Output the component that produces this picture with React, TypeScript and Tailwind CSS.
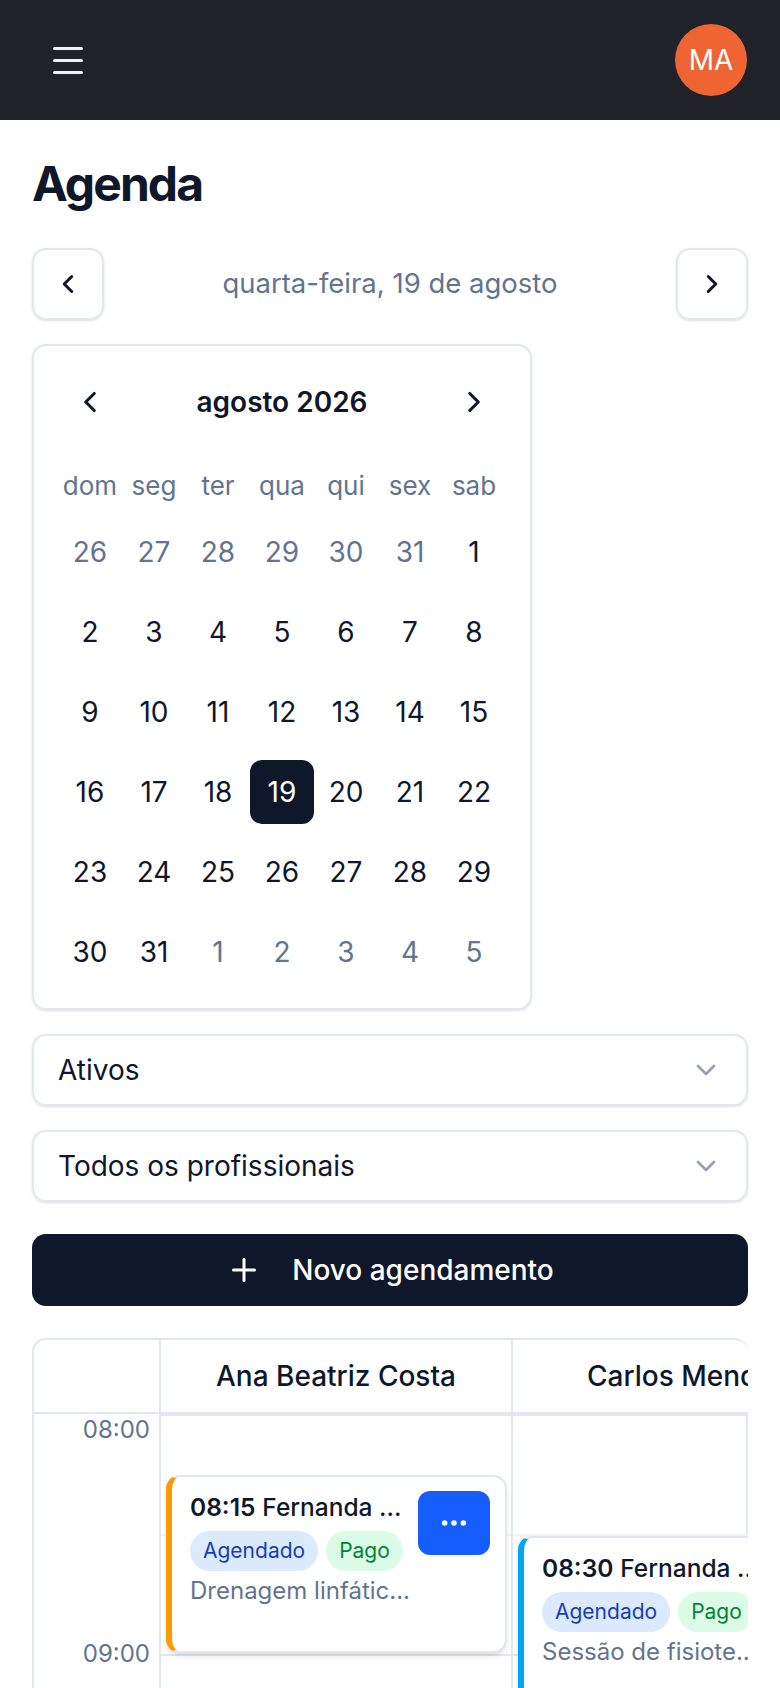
import React from 'react';
import { ChevronLeft, ChevronRight, ChevronDown, Plus, Ellipsis } from 'lucide-react';

const weekDays = ['dom', 'seg', 'ter', 'qua', 'qui', 'sex', 'sab'];

type Day = { n: number; out?: boolean; selected?: boolean };

const weeks: Day[][] = [
  [{ n: 26, out: true }, { n: 27, out: true }, { n: 28, out: true }, { n: 29, out: true }, { n: 30, out: true }, { n: 31, out: true }, { n: 1 }],
  [2, 3, 4, 5, 6, 7, 8].map((n) => ({ n })),
  [9, 10, 11, 12, 13, 14, 15].map((n) => ({ n })),
  [16, 17, 18, 19, 20, 21, 22].map((n) => ({ n, selected: n === 19 })),
  [23, 24, 25, 26, 27, 28, 29].map((n) => ({ n })),
  [{ n: 30 }, { n: 31 }, { n: 1, out: true }, { n: 2, out: true }, { n: 3, out: true }, { n: 4, out: true }, { n: 5, out: true }],
];

const Badge: React.FC<{ tone: 'blue' | 'green'; children: React.ReactNode }> = ({ tone, children }) => (
  <span
    className={
      tone === 'blue'
        ? 'h-[40px] px-[13px] rounded-full flex items-center text-[21px] bg-blue-100 text-blue-800'
        : 'h-[40px] px-[13px] rounded-full flex items-center text-[21px] bg-green-100 text-green-700'
    }
  >
    {children}
  </span>
);

const Appointment: React.FC<{ time: string; name: string; desc: string; accent: string; className: string }> = ({
  time,
  name,
  desc,
  accent,
  className,
}) => (
  <div
    className={`absolute left-[5px] w-[341px] bg-white border-2 border-slate-200 border-l-[6px] ${accent} rounded-[14px] shadow-md pl-[18px] pr-[15px] pt-[14px] flex gap-[6px] z-10 ${className}`}
  >
    <div className="flex-1 min-w-0">
      <div className="text-[24.5px] leading-[32px] text-slate-900 whitespace-nowrap overflow-hidden">
        <span className="font-semibold">{time}</span> <span className="font-medium">{name}</span>
      </div>
      <div className="flex gap-[8px] mt-[8px]">
        <Badge tone="blue">Agendado</Badge>
        <Badge tone="green">Pago</Badge>
      </div>
      <div className="mt-[4px] text-[24px] leading-[32px] text-slate-500 whitespace-nowrap overflow-hidden">{desc}</div>
    </div>
    <button className="w-[72px] h-[64px] shrink-0 rounded-[12px] bg-blue-600 flex items-center justify-center">
      <Ellipsis size={32} strokeWidth={2.2} className="text-white" />
    </button>
  </div>
);

const Slots: React.FC = () => (
  <>
    <div className="h-[120px] border-t-2 border-slate-200" />
    <div className="h-[120px] border-t-2 border-slate-100" />
    <div className="h-[120px] border-t-2 border-slate-200" />
  </>
);

export default function App() {
  return (
    <div className="h-[1688px] overflow-hidden bg-white font-[Inter,sans-serif] text-slate-900">
      {/* Top bar */}
      <header className="h-[120px] bg-[#1f2228] flex items-center justify-between pl-[53px] pr-[33px]">
        <svg width="30" height="27" viewBox="0 0 30 27" fill="none">
          <path d="M1.5 1.5h27M1.5 13.5h27M1.5 25.5h27" stroke="#eef0f3" strokeWidth="3" strokeLinecap="round" />
        </svg>
        <div className="w-[72px] h-[72px] rounded-full bg-[#ee6533] flex items-center justify-center text-white text-[28px]">
          MA
        </div>
      </header>

      <main className="px-8 pt-8 flex flex-col">
        <h1 className="text-[48px] leading-[64px] font-bold tracking-[-0.04em] text-slate-900">Agenda</h1>

        {/* Day navigation */}
        <div className="mt-8 flex items-center justify-between">
          <button className="w-[72px] h-[72px] rounded-[14px] border-2 border-slate-200 shadow-sm flex items-center justify-center">
            <ChevronLeft size={30} strokeWidth={2.4} />
          </button>
          <span className="text-[27.5px] text-slate-500">quarta-feira, 19 de agosto</span>
          <button className="w-[72px] h-[72px] rounded-[14px] border-2 border-slate-200 shadow-sm flex items-center justify-center">
            <ChevronRight size={30} strokeWidth={2.4} />
          </button>
        </div>

        {/* Calendar */}
        <div className="mt-6 w-[500px] border-2 border-slate-200 rounded-[14px] shadow-sm p-6">
          <div className="h-[64px] flex items-center justify-between">
            <div className="w-[64px] flex justify-center">
              <ChevronLeft size={34} strokeWidth={2.2} />
            </div>
            <span className="text-[28px] font-semibold">agosto 2026</span>
            <div className="w-[64px] flex justify-center">
              <ChevronRight size={34} strokeWidth={2.2} />
            </div>
          </div>
          <div className="mt-8 h-[38px] grid grid-cols-7">
            {weekDays.map((d) => (
              <span key={d} className="flex items-center justify-center text-[26px] text-slate-500">
                {d}
              </span>
            ))}
          </div>
          <div className="mt-4 flex flex-col gap-4">
            {weeks.map((w, i) => (
              <div key={i} className="grid grid-cols-7">
                {w.map((d, j) => (
                  <span
                    key={j}
                    className={
                      d.selected
                        ? 'h-[64px] flex items-center justify-center text-[28px] rounded-[12px] bg-slate-900 text-white'
                        : d.out
                        ? 'h-[64px] flex items-center justify-center text-[28px] text-slate-500'
                        : 'h-[64px] flex items-center justify-center text-[28px] text-slate-900'
                    }
                  >
                    {d.n}
                  </span>
                ))}
              </div>
            ))}
          </div>
        </div>

        {/* Filters */}
        <div className="mt-6 h-[72px] rounded-[14px] border-2 border-slate-200 shadow-sm px-6 flex items-center justify-between">
          <span className="text-[28px]">Ativos</span>
          <ChevronDown size={32} strokeWidth={2} className="text-slate-400" />
        </div>
        <div className="mt-6 h-[72px] rounded-[14px] border-2 border-slate-200 shadow-sm px-6 flex items-center justify-between">
          <span className="text-[28px]">Todos os profissionais</span>
          <ChevronDown size={32} strokeWidth={2} className="text-slate-400" />
        </div>

        <button className="mt-8 h-[72px] rounded-[14px] bg-slate-900 text-white flex items-center justify-center gap-[30px]">
          <Plus size={36} strokeWidth={2} />
          <span className="text-[28px] font-medium">Novo agendamento</span>
        </button>

        {/* Schedule grid */}
        <div className="mt-8 w-[716px] border-t-2 border-l-2 border-slate-200 rounded-tl-[14px] rounded-tr-[14px] overflow-hidden">
          <div className="flex h-[74px] border-b-2 border-slate-200 w-[1183px]">
            <div className="w-[127px] shrink-0 border-r-2 border-slate-200" />
            <div className="w-[352px] shrink-0 border-r-2 border-slate-200 flex items-center justify-center text-[28px] font-medium">
              Ana Beatriz Costa
            </div>
            <div className="w-[352px] shrink-0 border-r-2 border-slate-200 flex items-center justify-center text-[28px] font-medium">
              Carlos Mendes
            </div>
            <div className="w-[352px] shrink-0 border-r-2 border-slate-200 flex items-center justify-center text-[28px] font-medium">
              Juliana Rocha
            </div>
          </div>
          <div className="border-r-2 border-slate-200">
            <div className="flex w-[1183px]">
              <div className="relative w-[127px] shrink-0 border-r-2 border-slate-200 h-[360px]">
                <span className="absolute right-[9px] top-0 text-[24px] leading-[32px] text-slate-500">08:00</span>
                <span className="absolute right-[9px] top-[224px] text-[24px] leading-[32px] text-slate-500">09:00</span>
              </div>
              <div className="relative w-[352px] shrink-0 border-r-2 border-slate-200">
                <Slots />
                <Appointment
                  time="08:15"
                  name="Fernanda ..."
                  desc="Drenagem linfátic..."
                  accent="border-l-amber-500"
                  className="top-[61px] h-[178px]"
                />
              </div>
              <div className="relative w-[352px] shrink-0 border-r-2 border-slate-200">
                <Slots />
                <Appointment
                  time="08:30"
                  name="Fernanda ..."
                  desc="Sessão de fisiote..."
                  accent="border-l-sky-500"
                  className="top-[122px] h-[178px]"
                />
              </div>
              <div className="relative w-[352px] shrink-0 border-r-2 border-slate-200">
                <Slots />
              </div>
            </div>
          </div>
        </div>
      </main>
    </div>
  );
}
